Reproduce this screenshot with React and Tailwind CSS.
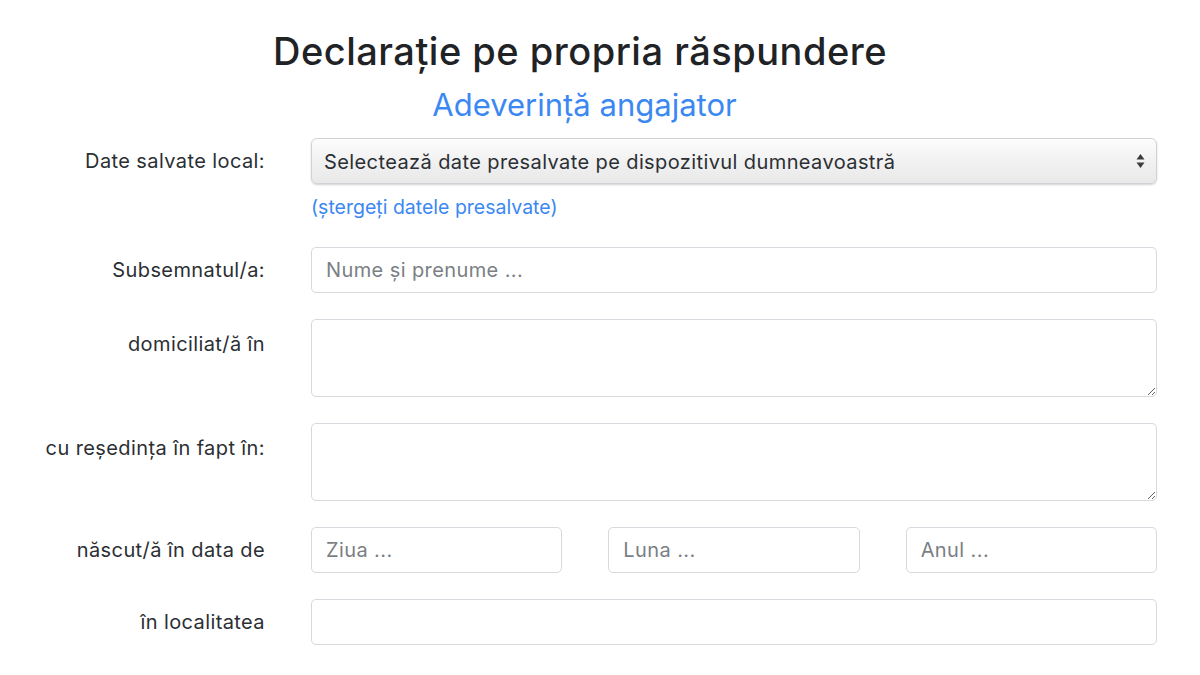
import React from "react";

const font = { fontFamily: 'Inter, "Liberation Sans", Arial, sans-serif' };

function Label({ children, top = false }) {
  return (
    <div
      className={`w-[265px] shrink-0 text-right text-[20px] tracking-[0.4px] text-[#2b2f33] ${
        top ? "pt-[10px]" : "flex items-center justify-end h-[46px]"
      }`}
    >
      {children}
    </div>
  );
}

function Row({ children, className = "" }) {
  return <div className={`flex gap-[46px] ${className}`}>{children}</div>;
}

const inputCls =
  "block h-[46px] w-full rounded-[5px] border border-[#d6d9dd] bg-white px-[14px] text-[20px] tracking-[0.4px] text-[#2b2f33] placeholder:text-[#7a7f85] outline-none";

const areaCls =
  "block h-[78px] w-full rounded-[5px] border border-[#d6d9dd] bg-white px-[14px] py-[10px] text-[20px] outline-none";

export default function App() {
  return (
    <div className="min-h-[675px] w-[1200px] bg-white" style={font}>
      <div className="w-[1160px] pt-[28px]">
        <h1 className="text-center text-[38px] leading-[46px] font-medium tracking-[0.5px] text-[#1f2326]">
          Declarație pe propria răspundere
        </h1>
        <div className="mt-[13px] pl-[9px] text-center text-[31px] leading-[36px] text-[#3b88f2]">
          Adeverință angajator
        </div>
      </div>

      <div className="mt-[15px] flex w-[1157px] flex-col">
        <Row>
          <Label>Date salvate local:</Label>
          <div className="flex w-[846px] flex-col">
            <div className="relative flex h-[46px] items-center rounded-[6px] border border-[#cfd2d6] bg-gradient-to-b from-[#fdfdfd] via-[#f1f1f1] to-[#e9e9e9] pl-[12px] pr-[30px] pt-[1px] text-[20px] tracking-[0.4px] text-[#2b2f33] shadow-[0_1px_2px_rgba(0,0,0,0.18)]">
              Selectează date presalvate pe dispozitivul dumneavoastră
              <svg
                className="absolute right-[11px] top-1/2 -translate-y-1/2"
                width="9"
                height="16"
                viewBox="0 0 9 16"
              >
                <path d="M4.5 1 L8.5 6.5 L0.5 6.5 Z" fill="#3a3d40" />
                <path d="M4.5 15 L8.5 9.5 L0.5 9.5 Z" fill="#3a3d40" />
              </svg>
            </div>
            <a className="mt-[11px] block text-[19.5px] leading-[24px] text-[#3b88f2]">
              (ștergeți datele presalvate)
            </a>
          </div>
        </Row>

        <Row className="mt-[28px]">
          <Label>Subsemnatul/a:</Label>
          <div className="w-[846px]">
            <input className={inputCls} placeholder="Nume și prenume ..." />
          </div>
        </Row>

        <Row className="mt-[26px]">
          <Label top>domiciliat/ă în</Label>
          <div className="w-[846px]">
            <textarea className={areaCls} />
          </div>
        </Row>

        <Row className="mt-[26px]">
          <Label top>cu reședința în fapt în:</Label>
          <div className="w-[846px]">
            <textarea className={areaCls} />
          </div>
        </Row>

        <Row className="mt-[26px]">
          <Label>născut/ă în data de</Label>
          <div className="grid w-[846px] grid-cols-3 gap-[46px]">
            <input className={inputCls} placeholder="Ziua ..." />
            <input className={inputCls} placeholder="Luna ..." />
            <input className={inputCls} placeholder="Anul ..." />
          </div>
        </Row>

        <Row className="mt-[26px]">
          <Label>în localitatea</Label>
          <div className="w-[846px]">
            <input className={inputCls} />
          </div>
        </Row>
      </div>
    </div>
  );
}
